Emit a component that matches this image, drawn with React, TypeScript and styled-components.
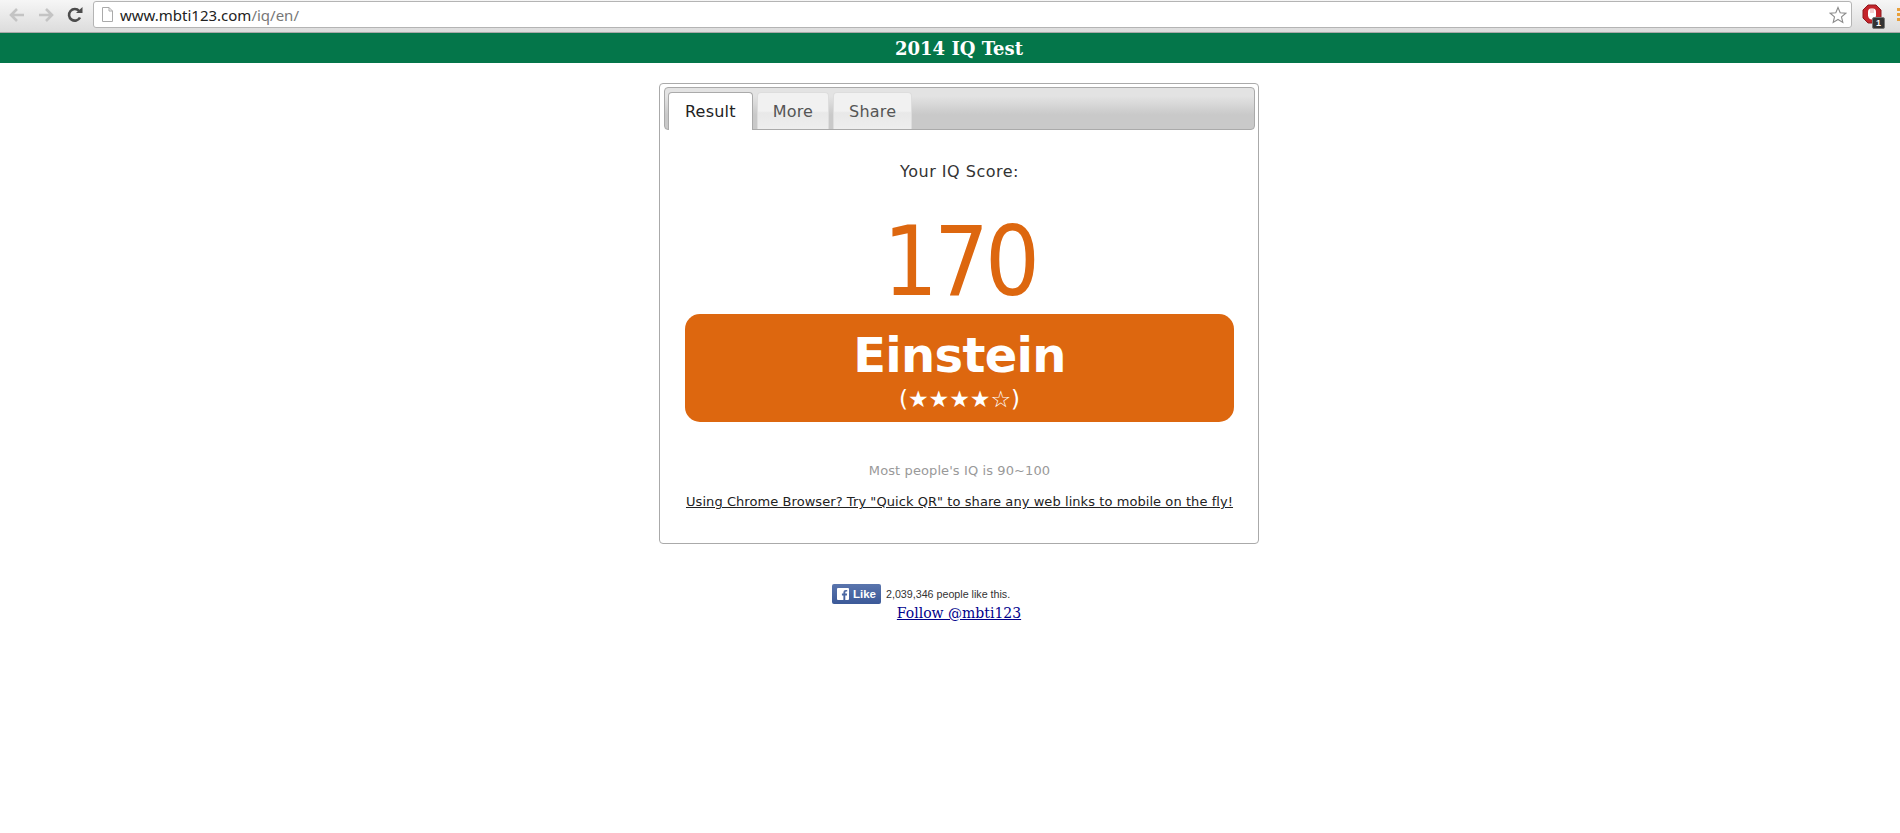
import React from 'react';
import styled, { createGlobalStyle } from 'styled-components';

const GlobalStyle = createGlobalStyle`
	html, body {
		margin: 0;
		padding: 0;
		background: #fff;
		overflow: hidden;
	}
`;

const ChromeBar = styled.div`
	height: 33px;
	box-sizing: border-box;
	display: flex;
	align-items: flex-start;
	background: linear-gradient(#f6f6f6, #dcdcdc);
	border-bottom: 1px solid #a9a9a9;
`;

const NavIcons = styled.div`
	width: 93px;
	height: 30px;
	flex: none;
	display: flex;
	align-items: center;
	gap: 11px;
	padding-left: 8px;
	box-sizing: border-box;
`;

const Omnibox = styled.div`
	flex: 1;
	height: 27px;
	margin-top: 1px;
	box-sizing: border-box;
	background: #fff;
	border: 1px solid #b4b4b4;
	border-radius: 3px;
	display: flex;
	align-items: center;
	padding: 0 4px 0 8px;
	gap: 7px;
	font: 15px 'Noto Sans', 'Liberation Sans', sans-serif;
`;

const Host = styled.span`
	color: #222;
`;

const UrlPath = styled.span`
	color: #777;
`;

const Spacer = styled.span`
	flex: 1;
`;

const Extensions = styled.div`
	width: 48px;
	height: 28px;
	flex: none;
	position: relative;
	display: flex;
	align-items: center;
	padding-left: 10px;
	gap: 15px;
	box-sizing: border-box;
`;

const BadgeCount = styled.span`
	position: absolute;
	left: 21px;
	top: 18px;
	width: 11px;
	height: 10px;
	background: #333;
	border: 1px solid #777;
	box-sizing: content-box;
	margin: -1px;
	border-radius: 2px;
	color: #fff;
	font: bold 9px/10px 'Liberation Sans', sans-serif;
	text-align: center;
`;

const MenuDots = styled.div`
	display: flex;
	flex-direction: column;
	gap: 2px;
	width: 3px;

	i {
		display: block;
		height: 3px;
		background: #e8a03c;
	}
`;

const SiteHeader = styled.header`
	height: 30px;
	padding-left: 18px;
	background: #04764a;
	color: #fff;
	text-align: center;
	font: bold 18px/32px 'DejaVu Serif', serif;
`;

const Content = styled.div`
	padding-left: 18px;
`;

const Card = styled.main`
	width: 600px;
	height: 461px;
	margin: 20px auto 0;
	box-sizing: border-box;
	border: 1px solid #aaa;
	border-radius: 4px;
	padding: 3px 3px 0 4px;
	font-family: 'DejaVu Sans', Verdana, sans-serif;
`;

const TabBar = styled.nav`
	height: 43px;
	box-sizing: border-box;
	border: 1px solid #aaa;
	border-radius: 4px;
	background: linear-gradient(#e3e3e3 20%, #c9c9c9 65%);
	display: flex;
	align-items: flex-end;
	gap: 4px;
	padding-left: 3px;
`;

const Tab = styled.div<{ $active?: boolean }>`
	height: ${(p) => (p.$active ? '38px' : '37px')};
	margin-bottom: ${(p) => (p.$active ? '-1px' : '0')};
	box-sizing: border-box;
	padding: 0 ${(p) => (p.$active ? '16px' : '15px')};
	border: 1px solid ${(p) => (p.$active ? '#aaa' : '#ddd')};
	border-bottom: none;
	border-radius: 4px 4px 0 0;
	background: ${(p) =>
		p.$active ? '#fff' : 'linear-gradient(#f1f1f1 50%, #e8e8e8 55%, #eee)'};
	color: ${(p) => (p.$active ? '#222' : '#555')};
	font-size: 16px;
	letter-spacing: 0.2px;
	line-height: 37px;
`;

const Panel = styled.section`
	padding: 0 21px;
	text-align: center;
`;

const ScoreLabel = styled.div`
	margin-top: 32px;
	font-size: 16px;
	letter-spacing: 0.5px;
	line-height: 20px;
	color: #333;
`;

const Score = styled.div`
	margin-top: 30px;
	font-family: 'DejaVu Sans Condensed', 'DejaVu Sans', sans-serif;
	font-size: 96px;
	line-height: 100px;
	letter-spacing: -4px;
	color: #dd670f;
`;

const RankBox = styled.div`
	height: 108px;
	margin-top: 2px;
	border-radius: 15px;
	background: #dd670f;
	color: #fff;
`;

const RankName = styled.div`
	font-size: 48px;
	font-weight: bold;
	letter-spacing: -0.7px;
	line-height: 60px;
	padding-top: 11px;
`;

const RankStars = styled.div`
	font-size: 23px;
	line-height: 28px;
`;

const Note = styled.div`
	margin-top: 41px;
	font-size: 13px;
	letter-spacing: 0.1px;
	line-height: 16px;
	color: #999;
`;

const PromoLink = styled.a`
	display: block;
	margin-top: 15px;
	font-size: 13px;
	letter-spacing: 0.07px;
	line-height: 16px;
	color: #222;
	text-decoration: underline;
	white-space: nowrap;
`;

const Social = styled.footer`
	margin-top: 40px;
	text-align: center;
`;

const LikeRow = styled.div`
	width: 254px;
	height: 20px;
	margin: 0 auto;
	display: flex;
	align-items: center;
	gap: 5px;
	font: 10.7px 'Liberation Sans', Arial, sans-serif;
	color: #333;
`;

const LikeButton = styled.span`
	width: 49px;
	height: 20px;
	box-sizing: border-box;
	border-radius: 2px;
	background: linear-gradient(#5a75ad, #3b5998);
	display: flex;
	align-items: center;
	gap: 4px;
	padding-left: 5px;
	color: #fff;
	font: bold 11.5px 'Liberation Sans', Arial, sans-serif;
`;

const FollowLink = styled.a`
	display: inline-block;
	font: 14px/19px 'DejaVu Serif', serif;
	color: #00008b;
	text-decoration: underline;
`;

const ArrowSvg = styled.svg<{ $flip?: boolean }>`
	transform: ${(p) => (p.$flip ? 'scaleX(-1)' : 'none')};
`;

const Arrow = ({ flip }: { flip?: boolean }) => (
	<ArrowSvg $flip={flip} width="18" height="16" viewBox="0 0 18 16">
		<path d="M9 2 L3 8 L9 14 M3 8 H16" fill="none" stroke="#c4c4c4" strokeWidth="2.6" />
	</ArrowSvg>
);

const Reload = () => (
	<svg width="18" height="18" viewBox="0 0 18 18">
		<path d="M14 11.5 A5.8 5.8 0 1 1 13.2 5" fill="none" stroke="#4c4c4c" strokeWidth="2.6" />
		<path d="M10 7 H16.5 V1 Z" fill="#4c4c4c" />
	</svg>
);

const PageIcon = () => (
	<svg width="11" height="15" viewBox="0 0 11 15">
		<path d="M.5.5 H7 L10.5 4 V14.5 H.5 Z M7 .5 V4 H10.5" fill="#fff" stroke="#aaa" />
	</svg>
);

const StarIcon = () => (
	<svg width="18" height="18" viewBox="0 0 18 18">
		<path
			d="M9 1.5 L11.2 6.7 L16.8 7.2 L12.5 10.9 L13.8 16.4 L9 13.5 L4.2 16.4 L5.5 10.9 L1.2 7.2 L6.8 6.7 Z"
			fill="#fff"
			stroke="#8a8a8a"
			strokeWidth="1.1"
		/>
	</svg>
);

const StopIcon = () => (
	<svg width="20" height="20" viewBox="0 0 20 20">
		<path d="M6 1 H14 L19 6 V14 L14 19 H6 L1 14 V6 Z" fill="#c4242b" stroke="#8d1a1f" />
		<path d="M6 8 Q6 4.5 9 4.5 H11 Q14 4.5 14 8 V11.5 Q13.5 15.5 10 15.5 Q6.5 15.5 6 11.5 Z" fill="#fff" />
		<path d="M9 5 V9 M11 5 V9" stroke="#e58a8e" strokeWidth="0.8" />
	</svg>
);

const FbIcon = () => (
	<svg width="12" height="12" viewBox="0 0 12 12">
		<path d="M1 0 H11 Q12 0 12 1 V11 Q12 12 11 12 H8.3 V7.4 H9.9 L10.1 5.6 H8.3 V4.5 Q8.3 3.6 9.2 3.6 H10.2 V2 H8.7 Q6.4 2 6.4 4.3 V5.6 H4.9 V7.4 H6.4 V12 H1 Q0 12 0 11 V1 Q0 0 1 0 Z" fill="#fff" />
	</svg>
);

export default function App() {
	return (
		<>
			<GlobalStyle />
			<ChromeBar>
				<NavIcons>
					<Arrow />
					<Arrow flip />
					<Reload />
				</NavIcons>
				<Omnibox>
					<PageIcon />
					<span>
						<Host>www.mbti123.com</Host>
						<UrlPath>/iq/en/</UrlPath>
					</span>
					<Spacer />
					<StarIcon />
				</Omnibox>
				<Extensions>
					<StopIcon />
					<BadgeCount>1</BadgeCount>
					<MenuDots>
						<i />
						<i />
						<i />
					</MenuDots>
				</Extensions>
			</ChromeBar>
			<SiteHeader>2014 IQ Test</SiteHeader>
			<Content>
				<Card>
					<TabBar>
						<Tab $active>Result</Tab>
						<Tab>More</Tab>
						<Tab>Share</Tab>
					</TabBar>
					<Panel>
						<ScoreLabel>Your IQ Score:</ScoreLabel>
						<Score>170</Score>
						<RankBox>
							<RankName>Einstein</RankName>
							<RankStars>(★★★★☆)</RankStars>
						</RankBox>
						<Note>Most people's IQ is 90~100</Note>
						<PromoLink>Using Chrome Browser? Try "Quick QR" to share any web links to mobile on the fly!</PromoLink>
					</Panel>
				</Card>
				<Social>
					<LikeRow>
						<LikeButton>
							<FbIcon />
							Like
						</LikeButton>
						2,039,346 people like this.
					</LikeRow>
					<FollowLink>Follow @mbti123</FollowLink>
				</Social>
			</Content>
		</>
	);
}
